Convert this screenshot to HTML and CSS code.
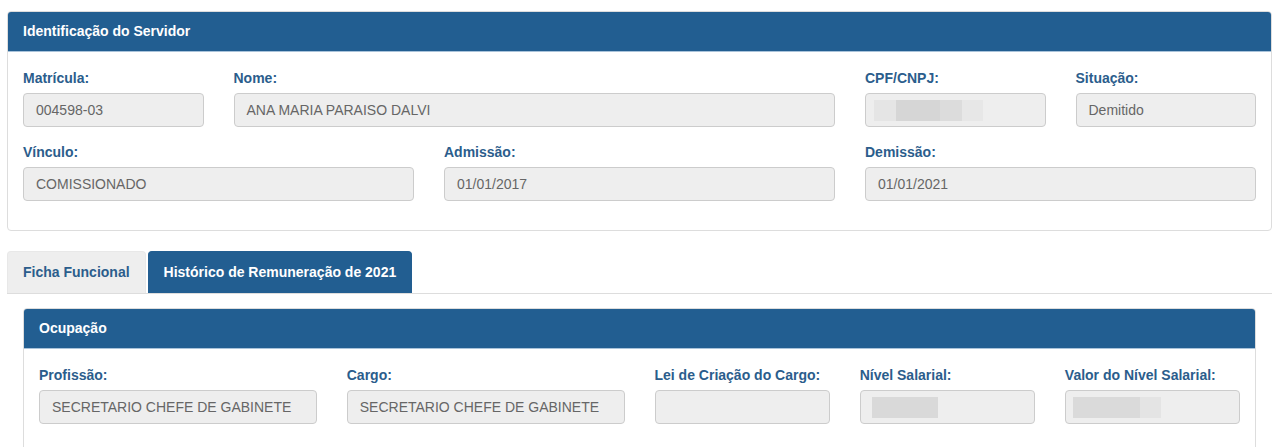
FILE: index.html
```
<!DOCTYPE html>
<html lang="pt-BR">
<head>
<meta charset="utf-8">
<title>Identificação do Servidor</title>
<link rel="stylesheet" href="styles.css">
</head>
<body>
<div class="page">
  <section class="panel panel-top">
    <div class="panel-heading">Identificação do Servidor</div>
    <div class="panel-body grid">
      <div class="field span-2"><label>Matrícula:</label><div class="input">004598-03</div></div>
      <div class="field span-6"><label>Nome:</label><div class="input">ANA MARIA PARAISO DALVI</div></div>
      <div class="field span-2"><label>CPF/CNPJ:</label><div class="input"><span class="blur blur-cpf"><i class="b1"></i><i class="b2"></i><i class="b3"></i><i class="b4"></i></span></div></div>
      <div class="field span-2"><label>Situação:</label><div class="input">Demitido</div></div>
      <div class="field span-4"><label>Vínculo:</label><div class="input">COMISSIONADO</div></div>
      <div class="field span-4"><label>Admissão:</label><div class="input">01/01/2017</div></div>
      <div class="field span-4"><label>Demissão:</label><div class="input">01/01/2021</div></div>
    </div>
  </section>

  <nav class="tabs">
    <a class="tab">Ficha Funcional</a>
    <a class="tab active">Histórico de Remuneração de 2021</a>
  </nav>

  <div class="tab-content">
    <section class="panel">
      <div class="panel-heading">Ocupação</div>
      <div class="panel-body grid">
        <div class="field span-3"><label>Profissão:</label><div class="input">SECRETARIO CHEFE DE GABINETE</div></div>
        <div class="field span-3"><label>Cargo:</label><div class="input">SECRETARIO CHEFE DE GABINETE</div></div>
        <div class="field span-2"><label>Lei de Criação do Cargo:</label><div class="input"></div></div>
        <div class="field span-2"><label>Nível Salarial:</label><div class="input"><span class="blur blur-nivel"></span></div></div>
        <div class="field span-2"><label>Valor do Nível Salarial:</label><div class="input"><span class="blur blur-valor"><i class="v1"></i><i class="v2"></i></span></div></div>
      </div>
    </section>
  </div>
</div>
</body>
</html>
```
FILE: styles.css
```
html {
  overflow: hidden;
}

body {
  margin: 0;
  background: #ffffff;
  font-family: "Liberation Sans", Arial, sans-serif;
  font-size: 14px;
  color: #555555;
}

.page {
  padding: 11px 8px 0 7px;
}

.panel {
  border: 1px solid #dddddd;
  border-radius: 4px;
  background: #ffffff;
  overflow: hidden;
}

.panel-heading {
  height: 39px;
  line-height: 39px;
  padding: 0 15px;
  background: #225e91;
  border-bottom: 1px solid #a9c3da;
  color: #ffffff;
  font-weight: bold;
  font-size: 14px;
}

.panel-body {
  padding: 16px 15px 29px;
}

.grid {
  display: grid;
  grid-template-columns: repeat(12, minmax(0, 1fr));
  column-gap: 30px;
  row-gap: 15px;
}

.span-2 { grid-column: span 2; }
.span-3 { grid-column: span 3; }
.span-4 { grid-column: span 4; }
.span-6 { grid-column: span 6; }

.field label {
  display: block;
  line-height: 20px;
  margin-bottom: 5px;
  font-weight: bold;
  font-size: 14px;
  color: #2b5d8c;
}

.input {
  box-sizing: border-box;
  height: 34px;
  line-height: 32px;
  padding: 0 12px;
  border: 1px solid #cccccc;
  border-radius: 4px;
  background: #eeeeee;
  color: #666666;
  font-size: 14px;
  white-space: nowrap;
  overflow: hidden;
  display: flex;
  align-items: center;
}

.blur {
  display: inline-flex;
  height: 21px;
}

.blur i {
  display: block;
  height: 100%;
}

.blur-cpf { margin-left: -4px; }
.blur-cpf .b1 { width: 22px; background: #e5e5e5; }
.blur-cpf .b2 { width: 44px; background: #d6d6d6; }
.blur-cpf .b3 { width: 22px; background: #dcdcdc; }
.blur-cpf .b4 { width: 21px; background: #e7e7e7; }

.blur-nivel {
  width: 66px;
  margin-left: -1px;
  background: #d9d9d9;
}

.blur-valor { margin-left: -5px; }
.blur-valor .v1 { width: 67px; background: #dadada; }
.blur-valor .v2 { width: 21px; background: #e4e4e4; }

.tabs {
  display: flex;
  align-items: flex-end;
  gap: 2px;
  margin-top: 20px;
  border-bottom: 1px solid #dddddd;
}

.tab {
  box-sizing: border-box;
  height: 42px;
  line-height: 41px;
  padding: 0 15px;
  border-radius: 4px 4px 0 0;
  font-weight: bold;
  font-size: 14px;
  color: #2b5d8c;
  background: #eeeeee;
  border: 1px solid #e8e8e8;
  border-bottom: 0;
}

.tab.active {
  background: #225e91;
  border-color: #225e91;
  color: #ffffff;
}

.tab-content {
  padding: 14px 16px 0;
}
```
